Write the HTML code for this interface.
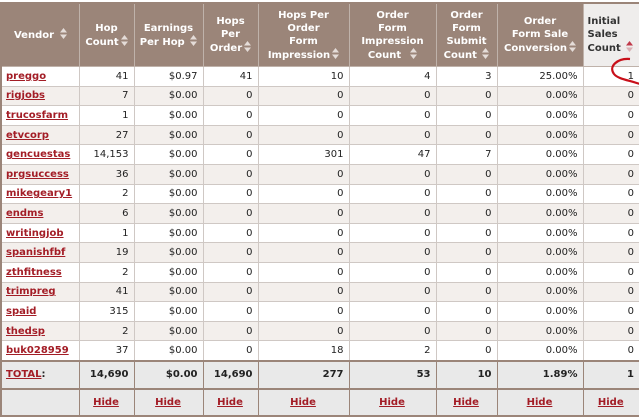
<!DOCTYPE html>
<html><head><meta charset="utf-8"><style>
body{margin:0;width:639px;height:417px;overflow:hidden;background:#fff;font-family:"DejaVu Sans","Liberation Sans",sans-serif;font-size:10px;color:#222}
table{position:absolute;left:0;top:2px;border-collapse:collapse;table-layout:fixed;width:639px;border:2px solid #9b8579}
td,th{border:1px solid #cfc8c4;padding:0 4px;white-space:nowrap;overflow:visible}
th{background:#9b8579;color:#fff;font-size:10px;font-weight:bold;height:62px;line-height:13px;border-color:#bfb2aa;border-top:none;text-align:center}
th.l{background:#efedec;color:#333;text-align:left}
td{height:18.6px;text-align:right;padding-right:5px}
td:first-child{text-align:left}
a{color:#a31d26;font-weight:bold;text-decoration:underline}
tr.o td{background:#f3efec}
tr.t td{background:#e9e9e9;font-weight:bold;height:26px;border-top:2px solid #9b8579;border-color:#9b8579}
tr.h td{background:#e9e9e9;height:25px;text-align:center;border-color:#9b8579;border-top:2px solid #9b8579}
.s{display:inline-block;width:7px;height:11px;vertical-align:-1px;margin-left:2px}
</style></head><body>
<table>
<colgroup><col style="width:78px"><col style="width:55px"><col style="width:69px"><col style="width:55px"><col style="width:91px"><col style="width:87px"><col style="width:61px"><col style="width:86px"><col style="width:57px"></colgroup>
<tr><th>Vendor <svg class="s" viewBox="0 0 7 11"><path d="M3.5 0L7 4.5H0Z M3.5 11L7 6.5H0Z" fill="#e4dcd8"/></svg></th><th>Hop<br>Count<svg class="s" viewBox="0 0 7 11"><path d="M3.5 0L7 4.5H0Z M3.5 11L7 6.5H0Z" fill="#e4dcd8"/></svg></th><th>Earnings<br>Per Hop <svg class="s" viewBox="0 0 7 11"><path d="M3.5 0L7 4.5H0Z M3.5 11L7 6.5H0Z" fill="#e4dcd8"/></svg></th><th>Hops<br>Per<br>Order<svg class="s" viewBox="0 0 7 11"><path d="M3.5 0L7 4.5H0Z M3.5 11L7 6.5H0Z" fill="#e4dcd8"/></svg></th><th>Hops Per<br>Order<br>Form<br>Impression<svg class="s" viewBox="0 0 7 11"><path d="M3.5 0L7 4.5H0Z M3.5 11L7 6.5H0Z" fill="#e4dcd8"/></svg></th><th>Order<br>Form<br>Impression<br>Count &nbsp;<svg class="s" viewBox="0 0 7 11"><path d="M3.5 0L7 4.5H0Z M3.5 11L7 6.5H0Z" fill="#e4dcd8"/></svg></th><th>Order<br>Form<br>Submit<br>Count <svg class="s" viewBox="0 0 7 11"><path d="M3.5 0L7 4.5H0Z M3.5 11L7 6.5H0Z" fill="#e4dcd8"/></svg></th><th>Order<br>Form Sale<br>Conversion<svg class="s" viewBox="0 0 7 11"><path d="M3.5 0L7 4.5H0Z M3.5 11L7 6.5H0Z" fill="#e4dcd8"/></svg></th><th class="l">Initial<br>Sales<br>Count <svg class="s" viewBox="0 0 7 11"><path d="M3.5 0L7 4.5H0Z" fill="#c0394a"/><path d="M3.5 11L7 6.5H0Z" fill="#d9b0b4"/></svg></th></tr>
<tr><td><a>preggo</a></td><td>41</td><td>$0.97</td><td>41</td><td>10</td><td>4</td><td>3</td><td>25.00%</td><td style="position:relative">1<svg style="position:absolute;left:0;top:-6px;overflow:visible" width="57" height="30"><path d="M46 -2 C34 -3 24 5 30 13 C34 18 44 19 56 23" stroke="#c8101a" stroke-width="2.2" fill="none"/></svg></td></tr>
<tr class="o"><td><a>rigjobs</a></td><td>7</td><td>$0.00</td><td>0</td><td>0</td><td>0</td><td>0</td><td>0.00%</td><td>0</td></tr>
<tr><td><a>trucosfarm</a></td><td>1</td><td>$0.00</td><td>0</td><td>0</td><td>0</td><td>0</td><td>0.00%</td><td>0</td></tr>
<tr class="o"><td><a>etvcorp</a></td><td>27</td><td>$0.00</td><td>0</td><td>0</td><td>0</td><td>0</td><td>0.00%</td><td>0</td></tr>
<tr><td><a>gencuestas</a></td><td>14,153</td><td>$0.00</td><td>0</td><td>301</td><td>47</td><td>7</td><td>0.00%</td><td>0</td></tr>
<tr class="o"><td><a>prgsuccess</a></td><td>36</td><td>$0.00</td><td>0</td><td>0</td><td>0</td><td>0</td><td>0.00%</td><td>0</td></tr>
<tr><td><a>mikegeary1</a></td><td>2</td><td>$0.00</td><td>0</td><td>0</td><td>0</td><td>0</td><td>0.00%</td><td>0</td></tr>
<tr class="o"><td><a>endms</a></td><td>6</td><td>$0.00</td><td>0</td><td>0</td><td>0</td><td>0</td><td>0.00%</td><td>0</td></tr>
<tr><td><a>writingjob</a></td><td>1</td><td>$0.00</td><td>0</td><td>0</td><td>0</td><td>0</td><td>0.00%</td><td>0</td></tr>
<tr class="o"><td><a>spanishfbf</a></td><td>19</td><td>$0.00</td><td>0</td><td>0</td><td>0</td><td>0</td><td>0.00%</td><td>0</td></tr>
<tr><td><a>zthfitness</a></td><td>2</td><td>$0.00</td><td>0</td><td>0</td><td>0</td><td>0</td><td>0.00%</td><td>0</td></tr>
<tr class="o"><td><a>trimpreg</a></td><td>41</td><td>$0.00</td><td>0</td><td>0</td><td>0</td><td>0</td><td>0.00%</td><td>0</td></tr>
<tr><td><a>spaid</a></td><td>315</td><td>$0.00</td><td>0</td><td>0</td><td>0</td><td>0</td><td>0.00%</td><td>0</td></tr>
<tr class="o"><td><a>thedsp</a></td><td>2</td><td>$0.00</td><td>0</td><td>0</td><td>0</td><td>0</td><td>0.00%</td><td>0</td></tr>
<tr><td><a>buk028959</a></td><td>37</td><td>$0.00</td><td>0</td><td>18</td><td>2</td><td>0</td><td>0.00%</td><td>0</td></tr>
<tr class="t"><td><a>TOTAL</a>:</td><td>14,690</td><td>$0.00</td><td>14,690</td><td>277</td><td>53</td><td>10</td><td>1.89%</td><td>1</td></tr>
<tr class="h"><td></td><td><a>Hide</a></td><td><a>Hide</a></td><td><a>Hide</a></td><td><a>Hide</a></td><td><a>Hide</a></td><td><a>Hide</a></td><td><a>Hide</a></td><td><a>Hide</a></td></tr>
</table>
</body></html>
